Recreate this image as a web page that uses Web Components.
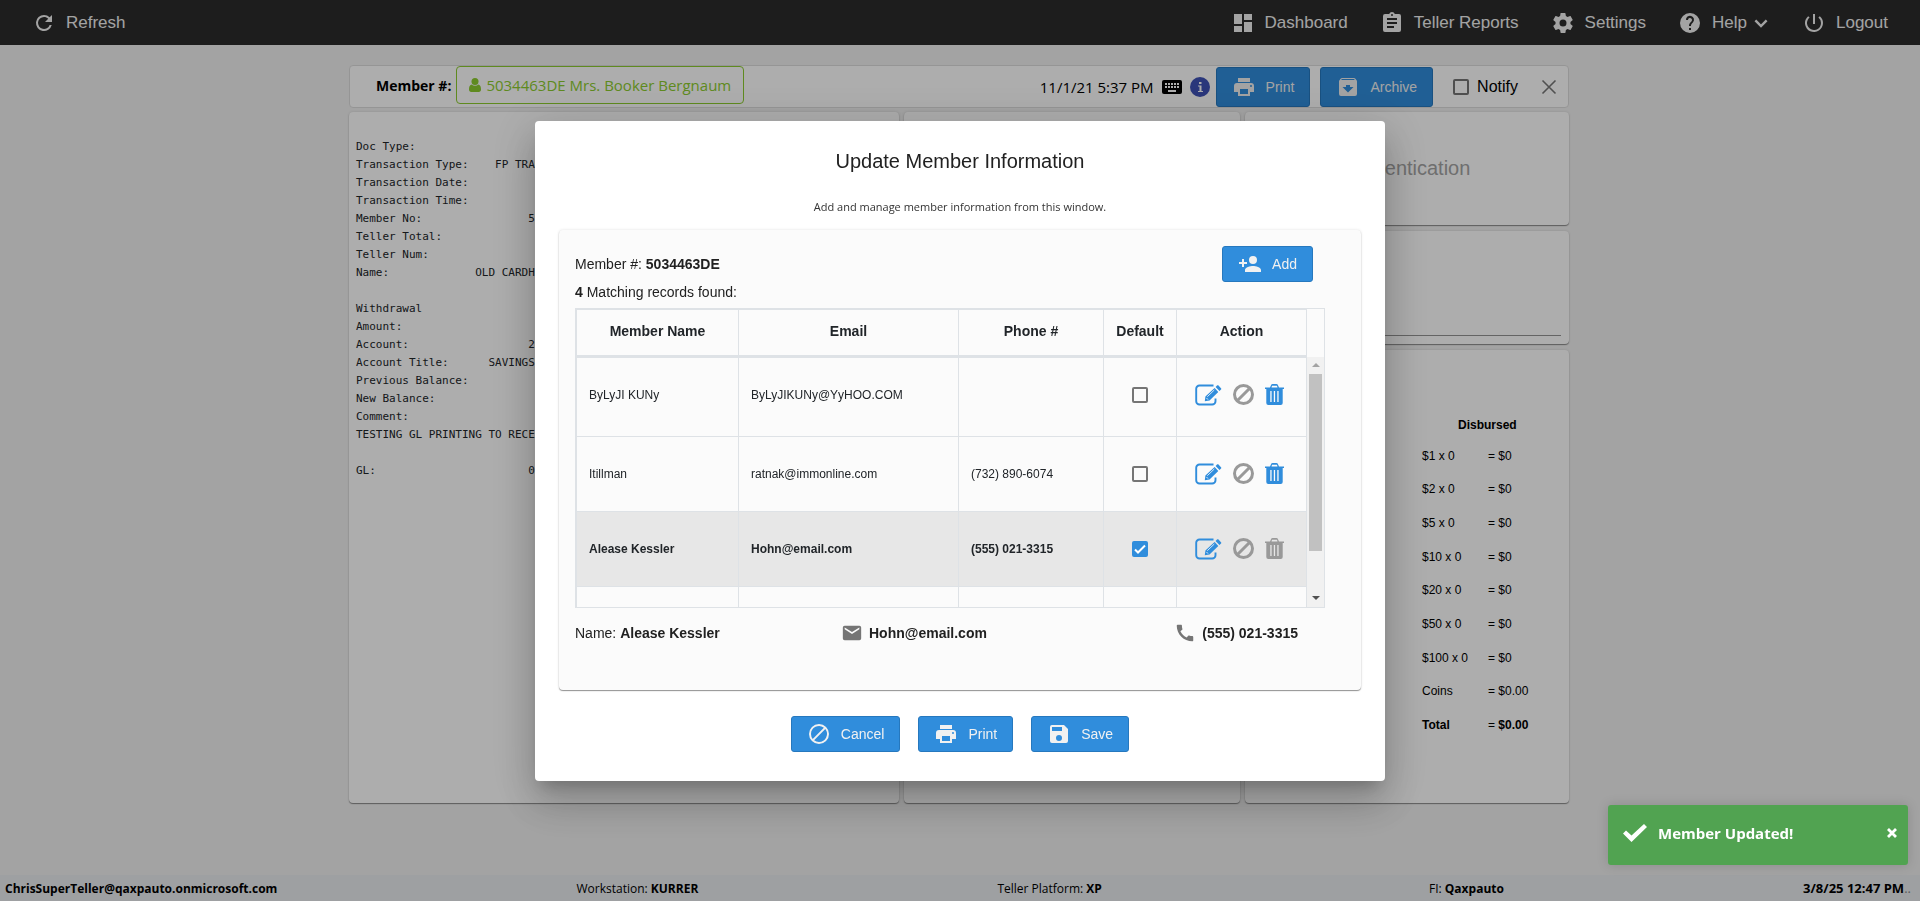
<!DOCTYPE html>
<html lang="en">
<head>
<meta charset="utf-8">
<title>Teller</title>
<style>
    body {
        margin: 0;
        background-color: #f1f1f1;
        font-family: "Liberation Sans", Arial, sans-serif;
    }
</style>
</head>
<body>
<teller-app>
    <top-bar slot="top"></top-bar>
    <member-bar slot="bar"></member-bar>
    <receipt-card slot="cards"></receipt-card>
    <ui-card slot="cards"></ui-card>
    <side-column slot="cards"></side-column>
    <status-bar slot="footer"></status-bar>
</teller-app>
<member-dialog></member-dialog>
<toast-message>Member Updated!</toast-message>

<script>
const ICONS = {
    refresh: ['0 0 24 24', '<path d="M17.65 6.35A7.96 7.96 0 0 0 12 4a8 8 0 1 0 7.73 10h-2.08A6 6 0 1 1 12 6c1.66 0 3.14.69 4.22 1.78L13 11h7V4z"/>'],
    dashboard: ['0 0 24 24', '<path d="M3 13h8V3H3zm0 8h8v-6H3zm10 0h8V11h-8zm0-18v6h8V3z"/>'],
    reports: ['0 0 24 24', '<path d="M19 3h-4.18a3 3 0 0 0-5.64 0H5a2 2 0 0 0-2 2v14a2 2 0 0 0 2 2h14a2 2 0 0 0 2-2V5a2 2 0 0 0-2-2zm-7 0a1 1 0 1 1 0 2 1 1 0 0 1 0-2zm2 14H7v-2h7zm3-4H7v-2h10zm0-4H7V7h10z"/>'],
    settings: ['0 0 24 24', '<path d="M19.43 12.98c.04-.32.07-.64.07-.98s-.03-.66-.07-.98l2.11-1.65c.19-.15.24-.42.12-.64l-2-3.46c-.12-.22-.39-.3-.61-.22l-2.49 1c-.52-.4-1.08-.73-1.69-.98l-.38-2.65A.49.49 0 0 0 14 2h-4c-.25 0-.46.18-.49.42l-.38 2.65c-.61.25-1.17.59-1.69.98l-2.49-1c-.23-.09-.49 0-.61.22l-2 3.46c-.13.22-.07.49.12.64l2.11 1.65c-.04.32-.07.65-.07.98s.03.66.07.98l-2.11 1.65c-.19.15-.24.42-.12.64l2 3.46c.12.22.39.3.61.22l2.49-1c.52.4 1.08.73 1.69.98l.38 2.65c.03.24.24.42.49.42h4c.25 0 .46-.18.49-.42l.38-2.65c.61-.25 1.17-.59 1.69-.98l2.49 1c.23.09.49 0 .61-.22l2-3.46c.12-.22.07-.49-.12-.64zM12 15.5a3.5 3.5 0 1 1 0-7 3.5 3.5 0 0 1 0 7z"/>'],
    help: ['0 0 24 24', '<path d="M12 2a10 10 0 1 0 0 20 10 10 0 0 0 0-20zm1 17h-2v-2h2zm2.07-7.75-.9.92C13.45 12.9 13 13.5 13 15h-2v-.5c0-1.1.45-2.1 1.17-2.83l1.24-1.26A2 2 0 1 0 10 9H8a4 4 0 1 1 7.07 2.25z"/>'],
    chevron: ['0 0 24 24', '<path d="m4.5 8.5 7.5 7.5 7.5-7.5" fill="none" stroke="currentColor" stroke-width="3.2"/>'],
    power: ['0 0 24 24', '<path d="M13 3h-2v10h2zm4.83 2.17-1.42 1.42A6.92 6.92 0 0 1 19 12a7 7 0 1 1-11.42-5.42L6.17 5.17A9 9 0 1 0 21 12a8.96 8.96 0 0 0-3.17-6.83z"/>'],
    print: ['0 0 24 24', '<path d="M19 8H5a3 3 0 0 0-3 3v6h4v4h12v-4h4v-6a3 3 0 0 0-3-3zm-3 11H8v-5h8zm3-7a1 1 0 1 1 0-2 1 1 0 0 1 0 2zM18 3H6v4h12z"/>'],
    archive: ['0 0 24 24', '<path d="m20.54 5.23-1.39-1.68A1.45 1.45 0 0 0 18 3H6c-.47 0-.88.21-1.16.55L3.46 5.23C3.17 5.57 3 6.02 3 6.5V19a2 2 0 0 0 2 2h14a2 2 0 0 0 2-2V6.5c0-.48-.17-.93-.46-1.27zM12 17.5 6.5 12H10v-2h4v2h3.5zM5.12 5l.81-1h12l.94 1z"/>'],
    addPerson: ['0 0 24 24', '<path d="M15 12a4 4 0 1 0 0-8 4 4 0 0 0 0 8zm-9-2V7H4v3H1v2h3v3h2v-3h3v-2zm9 4c-2.67 0-8 1.34-8 4v2h16v-2c0-2.66-5.33-4-8-4z"/>'],
    block: ['0 0 24 24', '<path d="M12 2a10 10 0 1 0 0 20 10 10 0 0 0 0-20zM4 12a8 8 0 0 1 12.9-6.31L5.69 16.9A7.9 7.9 0 0 1 4 12zm8 8a7.9 7.9 0 0 1-4.9-1.69L18.31 7.1A8 8 0 0 1 12 20z"/>'],
    save: ['0 0 24 24', '<path d="M17 3H5a2 2 0 0 0-2 2v14a2 2 0 0 0 2 2h14a2 2 0 0 0 2-2V7zm-5 16a3 3 0 1 1 0-6 3 3 0 0 1 0 6zm3-10H5V5h10z"/>'],
    mail: ['0 0 24 24', '<path d="M20 4H4a2 2 0 0 0-2 2v12a2 2 0 0 0 2 2h16a2 2 0 0 0 2-2V6a2 2 0 0 0-2-2zm0 4-8 5-8-5V6l8 5 8-5z"/>'],
    phone: ['0 0 24 24', '<path d="M20.01 15.38c-1.23 0-2.42-.2-3.53-.56a.98.98 0 0 0-1.01.24l-1.57 1.97c-2.83-1.35-5.48-3.9-6.89-6.83l1.95-1.66c.27-.28.35-.67.24-1.02A11.2 11.2 0 0 1 8.64 4c0-.54-.45-1-.99-1H4.19C3.65 3 3 3.24 3 4c0 9.28 7.73 17 17 17 .71 0 .99-.63.99-1.18v-3.45c0-.54-.45-.99-.98-.99z"/>'],
    keyboard: ['0 0 20 14', '<path d="M2 0h16a2 2 0 0 1 2 2v10a2 2 0 0 1-2 2H2a2 2 0 0 1-2-2V2a2 2 0 0 1 2-2z"/><path d="M3 4h14M3 7h14" stroke="#fff" stroke-width="2" stroke-dasharray="2 1"/><path d="M6 11h8" stroke="#fff" stroke-width="2"/>'],
    info: ['0 0 20 20', '<circle cx="10" cy="10" r="10" fill="#3f51b5"/><path d="M9 5h2.5v2H9zM8 8.500h3.500V14H13v1H8v-1h1.500V9.500H8z" fill="#fff"/>'],
    user: ['0 0 12 14', '<circle cx="6" cy="3.5" r="3.5"/><path d="M2.5 6.5C.6 7 0 9 0 11.5 0 13 .8 14 2.3 14h7.4c1.500 0 2.3-1 2.3-2.5C12 9 11.4 7 9.5 6.500c-2 1.6-5 1.6-7 0z"/>'],
    close: ['0 0 16 16', '<path d="m1.5 1.5 13 13m0-13-13 13" fill="none" stroke="currentColor" stroke-width="1.6"/>'],
    edit: ['0 0 27 22', '<path d="M18.5 1.5h-14a3.300 3.300 0 0 0-3.300 3.300v12.400a3.300 3.300 0 0 0 3.300 3.300h12.700a3.300 3.300 0 0 0 3.300-3.300V14.500" fill="none" stroke="currentColor" stroke-width="1.9"/><path d="M19.600 4 23.300 7.900 14.500 16.400l-4.700.9.600-4.700zm1-1 1.400-1.400c.5-.5 1-.5 1.500 0l2.500 2.600c.5.5.5.900 0 1.400l-1.500 1.400z"/><path d="m12.300 12.700 7-6.700M11.500 14l1.500 1.600" stroke="#fff" fill="none" stroke-width=".8"/>'],
    ban: ['0 0 21 21', '<circle cx="10.5" cy="10.5" r="9" fill="none" stroke="currentColor" stroke-width="3"/><path d="m4.500 16.500 12-12" stroke="currentColor" stroke-width="3"/>'],
    trash: ['0 0 19 21', '<path d="M0 3.500h5l1-2.300C6.300.4 6.800 0 7.600 0h3.800c.8 0 1.300.4 1.600 1.200l1 2.300h5V5h-1.300v14a2 2 0 0 1-2 2H3.300a2 2 0 0 1-2-2V5H0zm6.500 0h6L12 1.700H7zM5.300 7v11h1.300V7zm3.500 0v11h1.300V7zm3.500 0v11h1.300V7z" fill-rule="evenodd"/>'],
    check: ['0 0 24 18', '<path d="m0 9.500 3-3 5.500 5L21 0l3 3L8.500 18z"/>'],
    times: ['0 0 10 10', '<path d="m1 1 8 8m0-8L1 9" stroke="currentColor" stroke-width="2.800" fill="none"/>']
};

class UiIcon extends HTMLElement {
    constructor() {
        super();
        this.attachShadow({ mode: 'open' });
    }
    connectedCallback() {
        const [box, shape] = ICONS[this.getAttribute('name')];
        this.shadowRoot.innerHTML = `
            <style>
            :host { display: inline-block; flex: none; width: 24px; height: 24px; }
            svg { display: block; width: 100%; height: 100%; fill: currentColor; }
            </style>
            <svg viewBox="${box}" aria-hidden="true">${shape}</svg>
        `;
    }
}

class UiButton extends HTMLElement {
    constructor() {
        super();
        this.attachShadow({ mode: 'open' });
    }
    connectedCallback() {
        this.shadowRoot.innerHTML = `
            <style>
            :host { display: inline-flex; }
            button {
                display: flex;
                align-items: center;
                gap: 10px;
                height: var(--button-height, 36px);
                padding: 0 15px;
                border: 1px solid #2678be;
                border-radius: 3px;
                background-color: #308ddc;
                color: #f1f1f1;
                font: 14px "Liberation Sans", Arial, sans-serif;
                cursor: pointer;
            }
            </style>
            <button type="button">
                <ui-icon name="${this.getAttribute('icon')}"></ui-icon>
                <slot></slot>
            </button>
        `;
    }
}

// white panel used for all of the page's columns
class UiCard extends HTMLElement {
    constructor() {
        super();
        this.attachShadow({ mode: 'open' });
    }
    connectedCallback() {
        this.shadowRoot.innerHTML = `
            <style>
            :host {
                display: block;
                box-sizing: border-box;
                background-color: var(--card-color, #fff);
                border-radius: 4px;
                box-shadow: 0 1px 1px rgba(0, 0, 0, .4), 0 0 3px rgba(0, 0, 0, .12);
            }
            </style>
            <slot></slot>
        `;
    }
}

class UiCheck extends HTMLElement {
    constructor() {
        super();
        this.attachShadow({ mode: 'open' });
    }
    connectedCallback() {
        const label = this.getAttribute('label');
        this.shadowRoot.innerHTML = `
            <style>
            :host { display: inline-flex; }
            label { display: flex; align-items: center; gap: 8px; font-size: 16px; }
            input {
                appearance: none;
                box-sizing: border-box;
                width: 16px;
                height: 16px;
                margin: 0;
                border: 2px solid #757575;
                border-radius: 2px;
            }
            input:checked { border-color: #308ddc; background-color: #308ddc; }
            .box { display: grid; }
            .box > * { grid-area: 1 / 1; }
            svg { width: 16px; height: 16px; fill: none; stroke: #fff; stroke-width: 2; display: none; pointer-events: none; }
            input:checked + svg { display: block; }
            </style>
            <label>
                <span class="box">
                    <input type="checkbox" ${label ? `aria-label="${label}"` : ''} ${this.hasAttribute('checked') ? 'checked' : ''}>
                    <svg viewBox="0 0 16 16"><path d="m3 8.500 3 3L13 4.500"/></svg>
                </span>
                <slot></slot>
            </label>
        `;
    }
}

class TellerApp extends HTMLElement {
    constructor() {
        super();
        this.attachShadow({ mode: 'open' });
    }
    connectedCallback() {
        this.shadowRoot.innerHTML = `
            <style>
            :host { display: flex; flex-direction: column; min-height: 100vh; }
            main {
                flex: 1;
                display: flex;
                flex-direction: column;
                gap: 4px;
                box-sizing: border-box;
                width: 100%;
                max-width: 1222px;
                margin: 0 auto;
                padding: 20px 2px 72px 0;
            }
            .cards { flex: 1; display: grid; grid-template-columns: 550fr 336fr 324fr; gap: 5px; }
            </style>
            <slot name="top"></slot>
            <main>
                <slot name="bar"></slot>
                <div class="cards"><slot name="cards"></slot></div>
            </main>
            <slot name="footer"></slot>
        `;
    }
}

class TopBar extends HTMLElement {
    constructor() {
        super();
        this.attachShadow({ mode: 'open' });
    }
    connectedCallback() {
        this.shadowRoot.innerHTML = `
            <style>
            :host { display: block; background-color: #2c2c2c; color: #f1f1f1; font-size: 17px; }
            nav { display: flex; align-items: center; gap: 32px; height: 45px; padding: 0 32px; }
            a { display: flex; align-items: center; gap: 10px; color: inherit; text-decoration: none; }
            a:first-child { margin-right: auto; }
            .arrow { width: 18px; height: 18px; margin-left: -5px; }
            </style>
            <nav>
                <a href="#"><ui-icon name="refresh"></ui-icon>Refresh</a>
                <a href="#"><ui-icon name="dashboard"></ui-icon>Dashboard</a>
                <a href="#"><ui-icon name="reports"></ui-icon>Teller Reports</a>
                <a href="#"><ui-icon name="settings"></ui-icon>Settings</a>
                <a href="#"><ui-icon name="help"></ui-icon>Help<ui-icon class="arrow" name="chevron"></ui-icon></a>
                <a href="#"><ui-icon name="power"></ui-icon>Logout</a>
            </nav>
        `;
    }
}

class MemberBar extends HTMLElement {
    constructor() {
        super();
        this.attachShadow({ mode: 'open' });
    }
    connectedCallback() {
        this.shadowRoot.innerHTML = `
            <style>
            :host {
                display: flex;
                align-items: center;
                gap: 8px;
                box-sizing: border-box;
                height: 43px;
                padding: 0 8px 0 26px;
                border: 1px solid #dcdcdc;
                border-radius: 4px;
                background-color: #fff;
                font-family: "Open Sans", sans-serif;
                font-size: 15px;
            }
            .member { align-self: flex-start; display: flex; align-items: center; gap: 5px; margin-right: auto; }
            b { font-size: 14px; }
            .pill {
                display: flex;
                align-items: center;
                gap: 5px;
                height: 36px;
                padding: 0 12px;
                border: 1px solid #8ccc2e;
                border-radius: 4px;
                color: #8ccc2e;
                text-decoration: none;
            }
            .user { width: 12px; height: 14px; }
            .keyboard { width: 20px; height: 14px; }
            .info { width: 20px; height: 20px; }
            ui-button { --button-height: 40px; }
            .print { margin-left: -2px; }
            .archive { margin-left: 2px; }
            ui-check { margin: 0 12px; font-family: "Liberation Sans", Arial, sans-serif; }
            button { display: flex; border: 0; padding: 3px; background: none; color: #777; }
            .close { width: 16px; height: 16px; }
            </style>
            <div class="member">
                <b>Member #:</b>
                <a class="pill" href="#"><ui-icon class="user" name="user"></ui-icon>5034463DE Mrs. Booker Bergnaum</a>
            </div>
            <span>11/1/21 5:37 PM</span>
            <ui-icon class="keyboard" name="keyboard"></ui-icon>
            <ui-icon class="info" name="info"></ui-icon>
            <ui-button class="print" icon="print">Print</ui-button>
            <ui-button class="archive" icon="archive">Archive</ui-button>
            <ui-check>Notify</ui-check>
            <button type="button" aria-label="Close"><ui-icon class="close" name="close"></ui-icon></button>
        `;
    }
}

class ReceiptCard extends HTMLElement {
    constructor() {
        super();
        this.attachShadow({ mode: 'open' });
    }
    connectedCallback() {
        const lines = [
            'Doc Type:',
            'Transaction Type:    FP TRAN',
            'Transaction Date:',
            'Transaction Time:',
            'Member No:                50',
            'Teller Total:',
            'Teller Num:',
            'Name:             OLD CARDHO',
            '',
            'Withdrawal',
            'Amount:',
            'Account:                  2',
            'Account Title:      SAVINGS',
            'Previous Balance:',
            'New Balance:',
            'Comment:',
            'TESTING GL PRINTING TO RECE',
            '',
            'GL:                       0'
        ];
        this.shadowRoot.innerHTML = `
            <style>
            :host { display: grid; }
            pre {
                margin: 0;
                padding: 26px 7px;
                color: #212529;
                font: 11px/18px "DejaVu Sans Mono", monospace;
            }
            </style>
            <ui-card><pre>${lines.join('\n')}</pre></ui-card>
        `;
    }
}

class SideColumn extends HTMLElement {
    constructor() {
        super();
        this.attachShadow({ mode: 'open' });
    }
    connectedCallback() {
        const rows = ['$1 x 0', '$2 x 0', '$5 x 0', '$10 x 0', '$20 x 0', '$50 x 0', '$100 x 0']
            .map(name => `<tr><td>${name}</td><td>= $0</td></tr>`).join('');
        this.shadowRoot.innerHTML = `
            <style>
            :host { display: grid; grid-template-rows: 113px 113px 1fr; gap: 6px; }
            .auth { display: grid; place-items: center; color: #a4a4a4; font-size: 20px; }
            .blank { padding: 0 8px 8px; display: flex; align-items: flex-end; }
            .blank div { flex: 1; border-bottom: 1px solid #949494; }
            table { width: 131px; height: 334px; margin: 58px 16px 0 auto; border-spacing: 0; font-size: 12px; }
            th { box-sizing: border-box; height: 31px; text-align: left; padding: 3px 0 0 36px; }
            td { padding: 0; }
            td:first-child { width: 66px; }
            </style>
            <ui-card class="auth">Authentication</ui-card>
            <ui-card class="blank"><div></div></ui-card>
            <ui-card>
                <table>
                    <tr><th colspan="2">Disbursed</th></tr>
                    ${rows}
                    <tr><td>Coins</td><td>= $0.00</td></tr>
                    <tr><td><b>Total</b></td><td>= <b>$0.00</b></td></tr>
                </table>
            </ui-card>
        `;
    }
}

class StatusBar extends HTMLElement {
    constructor() {
        super();
        this.attachShadow({ mode: 'open' });
    }
    connectedCallback() {
        this.shadowRoot.innerHTML = `
            <style>
            :host {
                display: flex;
                justify-content: space-between;
                align-items: center;
                height: 26px;
                padding: 0 9px 0 5px;
                background-color: #e9ecef;
                font: 12px "Open Sans", sans-serif;
            }
            .fi { margin-left: 28px; }
            .clock { font-size: 13px; }
            i { font-style: normal; color: #888; }
            </style>
            <b>ChrisSuperTeller@qaxpauto.onmicrosoft.com</b>
            <span>Workstation: <b>KURRER</b></span>
            <span>Teller Platform: <b>XP</b></span>
            <span class="fi">FI: <b>Qaxpauto</b></span>
            <span class="clock"><b>3/8/25 12:47 PM</b><i>..</i></span>
        `;
    }
}

class MemberTable extends HTMLElement {
    constructor() {
        super();
        this.attachShadow({ mode: 'open' });
    }
    connectedCallback() {
        this.shadowRoot.innerHTML = `
            <style>
            :host {
                display: flex;
                height: 298px;
                border: solid #dee2e6;
                border-width: 1px 1px 1px 0;
                overflow: hidden;
            }
            table {
                flex: 1;
                align-self: flex-start;
                table-layout: fixed;
                border-collapse: separate;
                border-spacing: 0;
                border-left: 2px solid #dee2e6;
                color: #212529;
                font-size: 12px;
            }
            th, td {
                box-sizing: border-box;
                padding: 0 12px;
                border: solid #dee2e6;
                border-width: 0 1px 1px 0;
                text-align: left;
            }
            th { height: 49px; padding: 0 0 2px; border-width: 1px 1px 3px 0; font-size: 14px; text-align: center; }
            td { height: 75px; }
            tr.first td { height: 79px; padding-bottom: 4px; }
            tr.picked { background-color: #e7e7e7; font-weight: bold; }
            td.box { padding-left: 0; padding-right: 0; text-align: center; }
            ui-check { vertical-align: middle; }
            .name { width: 162px; }
            .email { width: 220px; }
            .tel { width: 145px; }
            .default { width: 73px; }
            .actions { display: flex; align-items: center; justify-content: center; gap: 11px; padding-right: 4px; }
            button { display: flex; padding: 0; border: 0; background: none; color: #308ddc; }
            button:disabled { color: #999; }
            .edit { width: 27px; height: 22px; }
            .ban { width: 21px; height: 21px; }
            .trash { width: 19px; height: 21px; }
            .bar { flex: none; width: 17px; display: flex; flex-direction: column; margin-top: 48px; background-color: #f1f1f1; }
            .arrow { height: 17px; display: grid; place-items: center; }
            .arrow::before { content: ""; border: 4px solid transparent; border-top-width: 0; border-bottom-color: #a3a3a3; }
            .arrow.down::before { border-width: 4px 4px 0; border-color: #505050 transparent transparent; }
            .track { flex: 1; padding: 0 2px; }
            .thumb { height: 82%; background-color: #c1c1c1; }
            </style>
            <table>
                <colgroup>
                    <col class="name"><col class="email"><col class="tel"><col class="default"><col>
                </colgroup>
                <thead>
                    <tr><th>Member Name</th><th>Email</th><th>Phone #</th><th>Default</th><th>Action</th></tr>
                </thead>
                <tbody>
                    ${this.row('ByLyJI KUNy', 'ByLyJIKUNy@YyHOO.COM', '', 'first')}
                    ${this.row('Itillman', 'ratnak@immonline.com', '(732) 890-6074', '')}
                    ${this.row('Alease Kessler', 'Hohn@email.com', '(555) 021-3315', 'picked')}
                    <tr><td></td><td></td><td></td><td></td><td></td></tr>
                </tbody>
            </table>
            <div class="bar">
                <div class="arrow"></div>
                <div class="track"><div class="thumb"></div></div>
                <div class="arrow down"></div>
            </div>
        `;
    }

    row(name, email, phone, kind) {
        const picked = kind === 'picked';
        return `
            <tr class="${kind}">
                <td>${name}</td>
                <td>${email}</td>
                <td>${phone}</td>
                <td class="box"><ui-check label="Default" ${picked ? 'checked' : ''}></ui-check></td>
                <td><div class="actions">
                    <button type="button" aria-label="Edit"><ui-icon class="edit" name="edit"></ui-icon></button>
                    <button type="button" aria-label="Block" disabled><ui-icon class="ban" name="ban"></ui-icon></button>
                    <button type="button" aria-label="Delete" ${picked ? 'disabled' : ''}><ui-icon class="trash" name="trash"></ui-icon></button>
                </div></td>
            </tr>`;
    }
}

class MemberDialog extends HTMLElement {
    constructor() {
        super();
        this.attachShadow({ mode: 'open' });
    }
    connectedCallback() {
        this.shadowRoot.innerHTML = `
            <style>
            :host {
                position: fixed;
                inset: 0;
                display: grid;
                place-items: center;
                background-color: rgba(0, 0, 0, .32);
            }
            section {
                box-sizing: border-box;
                width: 850px;
                max-width: 80vw;
                padding: 24px;
                border-radius: 4px;
                background-color: #fff;
                color: #212121;
                box-shadow: 0 11px 15px -7px rgba(0, 0, 0, .2), 0 24px 38px 3px rgba(0, 0, 0, .14), 0 9px 46px 8px rgba(0, 0, 0, .12);
            }
            h1 { margin: 0; font-size: 20px; line-height: 32px; font-weight: normal; text-align: center; }
            p { margin: 20px 0 13px; font: 11px/20px "Open Sans", sans-serif; text-align: center; color: #333; }
            ui-card { --card-color: #fbfbfb; height: 460px; padding: 16px 36px 0 16px; font-size: 14px; }
            .head { display: flex; justify-content: space-between; align-items: center; padding-right: 12px; }
            .found { line-height: 20px; margin-bottom: 6px; }
            .contact {
                display: grid;
                grid-template-columns: 266px 1fr auto;
                align-items: center;
                padding: 14px 27px 0 0;
            }
            .contact span { display: flex; align-items: center; gap: 6px; }
            .contact ui-icon { width: 22px; height: 22px; color: #757575; }
            .contact .name { display: block; }
            footer { display: flex; justify-content: center; gap: 18px; padding: 26px 0 5px; }
            </style>
            <section role="dialog" aria-labelledby="title">
                <h1 id="title">Update Member Information</h1>
                <p>Add and manage member information from this window.</p>
                <ui-card>
                    <div class="head">
                        <div>Member #: <b>5034463DE</b></div>
                        <ui-button icon="addPerson">Add</ui-button>
                    </div>
                    <div class="found"><b>4</b> Matching records found:</div>
                    <member-table></member-table>
                    <div class="contact">
                        <span class="name">Name: <b>Alease Kessler</b></span>
                        <span><ui-icon name="mail"></ui-icon><b>Hohn@email.com</b></span>
                        <span><ui-icon name="phone"></ui-icon><b>(555) 021-3315</b></span>
                    </div>
                </ui-card>
                <footer>
                    <ui-button icon="block">Cancel</ui-button>
                    <ui-button icon="print">Print</ui-button>
                    <ui-button icon="save">Save</ui-button>
                </footer>
            </section>
        `;
    }
}

class ToastMessage extends HTMLElement {
    constructor() {
        super();
        this.attachShadow({ mode: 'open' });
    }
    connectedCallback() {
        this.shadowRoot.innerHTML = `
            <style>
            :host {
                position: fixed;
                right: 12px;
                bottom: 36px;
                display: flex;
                align-items: center;
                gap: 11px;
                box-sizing: border-box;
                width: 300px;
                height: 60px;
                padding: 0 11px 4px 15px;
                border-radius: 3px;
                background-color: #51a351;
                color: #fff;
                font: bold 15px "Open Sans", sans-serif;
                box-shadow: 0 0 12px rgba(0, 0, 0, .15);
            }
            .check { width: 24px; height: 24px; }
            button { display: flex; margin-left: auto; padding: 0; border: 0; background: none; color: #fff; }
            .times { width: 10px; height: 10px; }
            </style>
            <ui-icon class="check" name="check"></ui-icon>
            <slot></slot>
            <button type="button" aria-label="Dismiss"><ui-icon class="times" name="times"></ui-icon></button>
        `;
    }
}

customElements.define('ui-icon', UiIcon);
customElements.define('ui-button', UiButton);
customElements.define('ui-card', UiCard);
customElements.define('ui-check', UiCheck);
customElements.define('teller-app', TellerApp);
customElements.define('top-bar', TopBar);
customElements.define('member-bar', MemberBar);
customElements.define('receipt-card', ReceiptCard);
customElements.define('side-column', SideColumn);
customElements.define('status-bar', StatusBar);
customElements.define('member-table', MemberTable);
customElements.define('member-dialog', MemberDialog);
customElements.define('toast-message', ToastMessage);
</script>
</body>
</html>
